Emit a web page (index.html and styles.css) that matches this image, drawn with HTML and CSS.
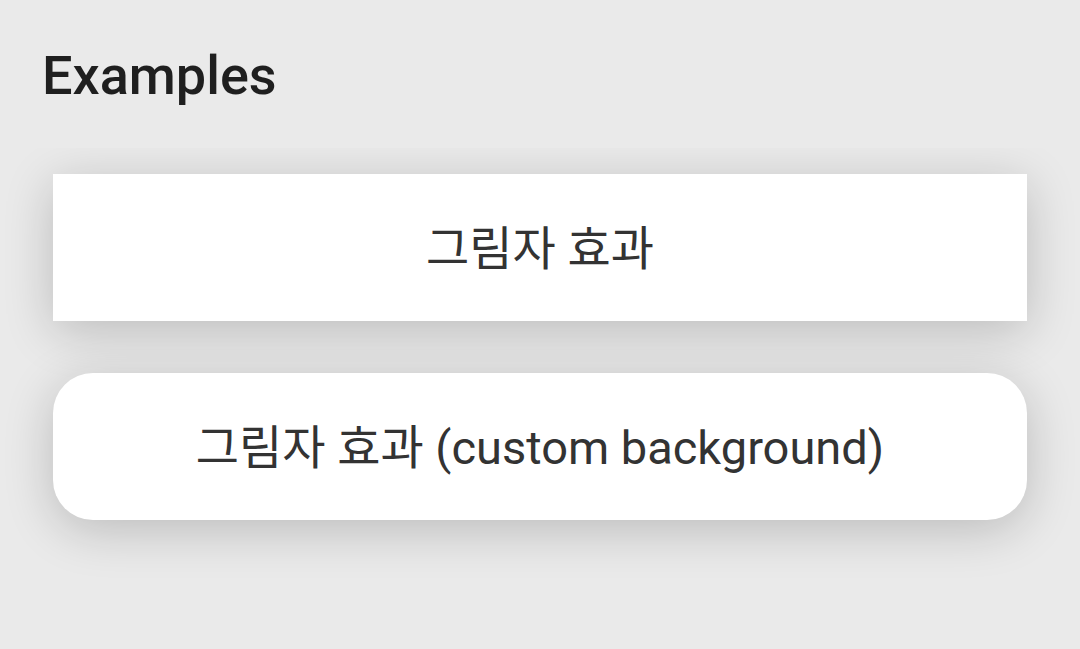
FILE: index.html
```html
<!DOCTYPE html>
<html lang="ko">
<head>
<meta charset="utf-8">
<link rel="stylesheet" href="styles.css">
</head>
<body>
<header class="header"><h1 class="title">Examples</h1></header>
<main class="list">
  <div class="card">그림자 효과</div>
  <div class="card card-round">그림자 효과 (custom background)</div>
</main>
</body>
</html>
```
FILE: styles.css
```css
html, body {
  margin: 0;
  padding: 0;
  background: #eaeaea;
  width: 1080px;
  height: 649px;
  overflow: hidden;
}
body {
  font-family: Roboto, "Noto Sans CJK KR", sans-serif;
}
.header {
  height: 148px;
  display: flex;
  align-items: center;
  padding-left: 42px;
  padding-top: 4px;
  box-sizing: border-box;
}
.title {
  margin: 0;
  font-size: 54px;
  font-weight: 500;
  color: #1f1f1f;
  line-height: 1;
}
.list {
  overflow: hidden;
  height: 457px;
  box-sizing: border-box;
  padding: 26px 53px 0;
  display: flex;
  flex-direction: column;
  gap: 52px;
}
.card {
  height: 147px;
  box-sizing: border-box;
  padding-bottom: 6px;
  background: #fff;
  display: flex;
  align-items: center;
  justify-content: center;
  font-size: 47px;
  color: #333;
  box-shadow: 0 10px 50px rgba(0, 0, 0, 0.2);
  flex-shrink: 0;
}
.card-round {
  border-radius: 40px;
}
```
